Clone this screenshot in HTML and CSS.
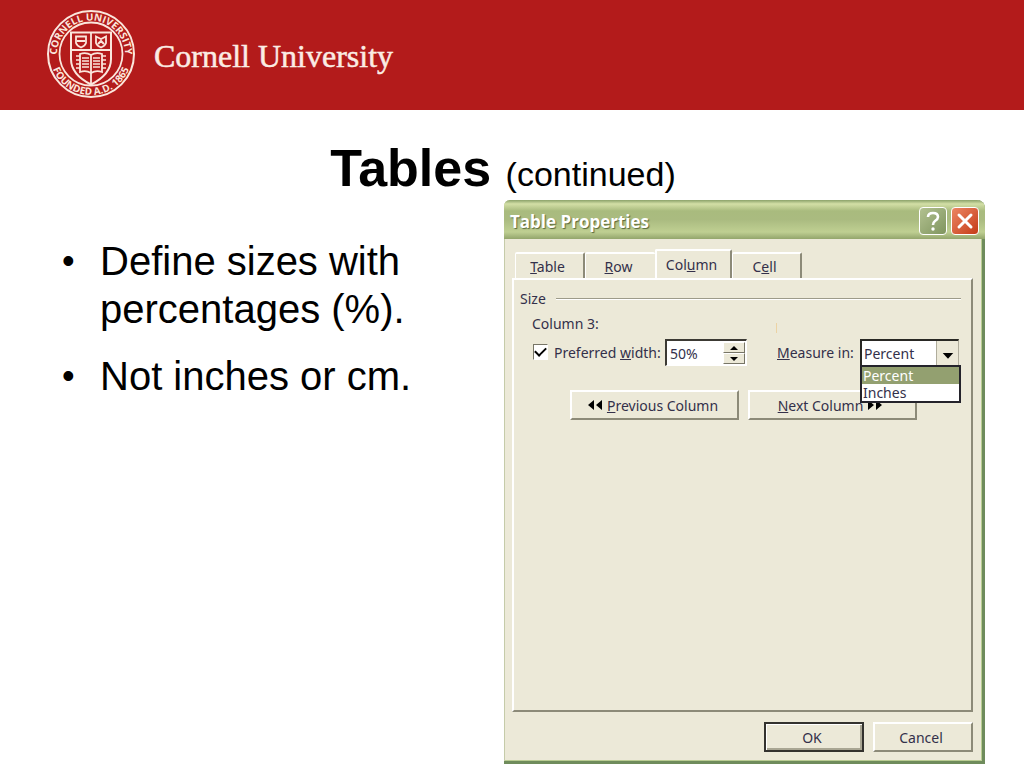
FILE: index.html
```html
<!DOCTYPE html>
<html lang="en">
<head>
<meta charset="utf-8">
<meta name="viewport" content="width=device-width, initial-scale=1">
<title>Tables (continued)</title>
<link rel="stylesheet" href="styles.css">
</head>
<body>
<header class="banner">
  <svg class="seal" viewBox="0 0 90 90" role="img" aria-label="Cornell University seal">
    <defs>
      <path id="arc-top" d="M13 57A34 34 0 1 1 77 57"/>
      <path id="arc-bottom" d="M4 45A41 41 0 0 0 86 45"/>
    </defs>
    <g fill="none" stroke="#fbe6dc">
      <circle cx="45" cy="45" r="43" stroke-width="2"/>
      <circle cx="45" cy="45" r="31.500" stroke-width="1.800"/>
      <path d="M25 23.500H65V50C65 62 56 70 45 75.500C34 70 25 62 25 50Z" stroke-width="2"/>
      <path d="M25 41H65M45 23.500V42M45 64V75" stroke-width="1.800"/>
      <path d="M30 27.500H40V34Q39 37 35 38.500Q31 37 30 34ZM50 27.500L55 30L60 27.500V34Q59 37 55 38.500Q51 37 50 34Z" stroke-width="1.800"/>
      <path d="M31 32H39M52 35L55 32L58 35" stroke-width="2"/>
      <path d="M45 46Q40 43 34 45V63Q40 61 45 64Q50 61 56 63V45Q50 43 45 46V64" stroke-width="1.800"/>
      <path d="M36 49H43M36 52H43M36 55H43M36 58H43M47 49H54M47 52H54M47 55H54M47 58H54" stroke-width="1.700"/>
      <path d="M30 47H34M30 51H34M30 55H34M30 59H34M56 47H60M56 51H60M56 55H60M56 59H60" stroke-width="1.700"/>
    </g>
    <text class="seal-text"><textPath href="#arc-top" startOffset="50%">CORNELL UNIVERSITY</textPath></text>
    <text class="seal-text"><textPath href="#arc-bottom" startOffset="50%">FOUNDED A.D. 1865</textPath></text>
  </svg>
  <span class="wordmark">Cornell University</span>
</header>

<main class="slide">
  <h1 class="title">Tables <small>(continued)</small></h1>
  <div class="columns">
    <ul class="bullets">
      <li>Define sizes with percentages (%).</li>
      <li>Not inches or cm.</li>
    </ul>

    <section class="dialog" aria-labelledby="dialog-title">
      <div class="titlebar">
        <h2 class="dialog-title" id="dialog-title">Table Properties</h2>
        <button class="caption-button help" type="button" aria-label="Help">
          <svg viewBox="0 0 26 26"><path d="M8 9Q8 5 13 5Q18 5 18 9Q18 11 15 13Q13 14.500 13 17" fill="none" stroke="#fff" stroke-width="2.600"/><circle cx="13" cy="21" r="1.700" fill="#fff"/></svg>
        </button>
        <button class="caption-button close" type="button" aria-label="Close">
          <svg viewBox="0 0 26 26"><path d="M7 7L19 19M19 7L7 19" stroke="#fff" stroke-width="3" stroke-linecap="round"/></svg>
        </button>
      </div>

      <div class="dialog-body">
        <div class="tabs" role="tablist">
          <button class="tab" type="button" role="tab" aria-selected="false"><span><u>T</u>able</span></button>
          <button class="tab" type="button" role="tab" aria-selected="false"><span><u>R</u>ow</span></button>
          <button class="tab active" type="button" role="tab" aria-selected="true"><span>Col<u>u</u>mn</span></button>
          <button class="tab" type="button" role="tab" aria-selected="false"><span>C<u>e</u>ll</span></button>
        </div>

        <div class="panel" role="tabpanel">
          <h3 class="group-heading">Size</h3>
          <p class="column-name">Column 3:<span class="caret-mark"></span></p>
          <div class="fields">
            <input class="check" type="checkbox" id="preferred" checked>
            <label class="width-label" for="preferred">Preferred <u>w</u>idth:</label>
            <div class="spinner">
              <input class="spin-input" type="text" value="50%" aria-label="Preferred width">
              <div class="spin-buttons">
                <button type="button" aria-label="Increase"><svg viewBox="0 0 8 4"><path d="M4 0L8 4H0Z"/></svg></button>
                <button type="button" aria-label="Decrease"><svg viewBox="0 0 8 4"><path d="M0 0H8L4 4Z"/></svg></button>
              </div>
            </div>
            <label class="measure-label" for="measure"><u>M</u>easure in:</label>
            <div class="combo">
              <select class="combo-select" id="measure">
                <option>Percent</option>
                <option>Inches</option>
              </select>
              <svg class="combo-arrow" viewBox="0 0 22 24"><path d="M6 12H17L11.500 18Z"/></svg>
              <ul class="combo-list" aria-label="Measure in choices">
                <li class="chosen">Percent</li>
                <li>Inches</li>
              </ul>
            </div>
          </div>
          <div class="nav">
            <button class="button" type="button">
              <svg class="arrows" viewBox="0 0 15 10"><path d="M7 0V10L1 5ZM15 0V10L9 5Z"/></svg>
              <span><u>P</u>revious Column</span>
            </button>
            <button class="button" type="button">
              <span><u>N</u>ext Column</span>
              <svg class="arrows" viewBox="0 0 15 10"><path d="M0 0V10L6 5ZM8 0V10L14 5Z"/></svg>
            </button>
          </div>
        </div>

        <div class="actions">
          <button class="button default" type="button">OK</button>
          <button class="button" type="button">Cancel</button>
        </div>
      </div>
    </section>
  </div>
</main>
</body>
</html>
```

FILE: styles.css
```css
* {
  box-sizing: border-box;
}

body {
  margin: 0;
  min-height: 100vh;
  display: flex;
  flex-direction: column;
  background: #fff;
  color: #000;
  font-family: "Liberation Sans", Arial, sans-serif;
}

.banner {
  display: flex;
  align-items: center;
  gap: 18px;
  height: 110px;
  padding: 0 46px 2px;
  background: #b31b1b;
}

.seal {
  width: 90px;
  height: 90px;
}

.seal-text {
  fill: #fbe6dc;
  font: bold 10px "Open Sans", sans-serif;
  text-anchor: middle;
}

.wordmark {
  padding-top: 4px;
  color: #fbece4;
  font: 32px "Liberation Serif", "Times New Roman", serif;
  -webkit-text-stroke: 0.5px #fbece4;
}

.slide {
  flex: 1;
  display: flex;
  flex-direction: column;
  padding-bottom: 4px;
}

.title {
  margin: 0;
  padding: 28px 18px 2px 0;
  font-size: 52px;
  line-height: 60px;
  text-align: center;
}

.title small {
  font-size: 34px;
  font-weight: normal;
  line-height: 1;
}

.columns {
  flex: 1;
  display: grid;
  grid-template-columns: 504fr 481fr;
  padding-right: 39px;
}

.bullets {
  margin: 0;
  padding: 37px 80px 0 100px;
  list-style: none;
  font-size: 40px;
  line-height: 48px;
}

.bullets li {
  margin-bottom: 19px;
}

.bullets li::before {
  content: "•";
  float: left;
  margin-left: -38px;
  font-size: 36px;
}

.dialog {
  display: flex;
  flex-direction: column;
  border: solid #6f8c5c;
  border-width: 0 3px 3px 0;
  border-radius: 6px 8px 0 0;
  background: #ece9d8;
  box-shadow: inset 1px 0 #c5cba9, inset -1px -1px #b9cc92;
  color: #33304a;
  font: 14px "Noto Sans", Tahoma, sans-serif;
}

.titlebar {
  display: flex;
  align-items: center;
  gap: 4px;
  height: 39px;
  padding: 3px 6px 0 6px;
  margin-right: -3px;
  border-radius: 6px 8px 0 0;
  background: linear-gradient(#8ba26a, #d3dfa6 10%, #a9bb7e 28%, #aabb80 50%, #bfcf92 82%, #93a56c);
}

.dialog-title {
  flex: 1;
  margin: 0;
  color: #fff;
  font: bold 17px "Open Sans", "Trebuchet MS", sans-serif;
  text-shadow: 1px 1px 1px #59683c;
}

.caption-button {
  width: 28px;
  height: 28px;
  padding: 0;
  border: 1px solid #fff;
  border-radius: 4px;
}

.caption-button svg {
  display: block;
}

.help {
  background: linear-gradient(135deg, #b2c190, #80955f);
}

.close {
  background: linear-gradient(135deg, #ec8664, #c53c18);
}

.dialog-body {
  flex: 1;
  display: flex;
  flex-direction: column;
  padding: 10px 9px 9px 8px;
}

.tabs {
  display: flex;
  align-items: flex-end;
  height: 29px;
  padding-left: 3px;
}

.tab {
  width: 70px;
  height: 26px;
  padding: 1px 6px 0 2px;
  border: solid #fff;
  border-width: 2px 2px 0 1px;
  border-right-color: #8c8a78;
  border-radius: 2px 2px 0 0;
  background: #ece9d8;
  color: inherit;
  font: inherit;
}

.tab.active {
  width: 77px;
  height: 29px;
  padding-bottom: 2px;
  border-left-width: 2px;
}

.tab:has(+ .active) {
  border-right-width: 0;
}

.panel {
  flex: 1;
  padding: 9px 10px 0 6px;
  border: 2px solid #fff;
  border-right-color: #8c8a78;
  border-bottom-color: #8c8a78;
}

.group-heading {
  display: flex;
  align-items: center;
  gap: 10px;
  margin: 0;
  font: inherit;
  line-height: 20px;
}

.group-heading::after {
  content: "";
  flex: 1;
  border-top: 1px solid #9d9b89;
  border-bottom: 1px solid #fff;
}

.column-name {
  display: flex;
  justify-content: space-between;
  margin: 5px 0 0 12px;
  line-height: 20px;
}

.caret-mark {
  width: 1px;
  height: 10px;
  margin: 9px 184px 0 0;
  background: #ecd3a4;
}

.fields {
  display: flex;
  align-items: center;
  margin-top: 5px;
  padding-left: 13px;
  white-space: nowrap;
}

.check {
  appearance: none;
  width: 15px;
  height: 16px;
  margin: 0 6px 2px 0;
  border: 1px solid;
  border-color: #777566 #fff #fff #777566;
  background: #fff;
  display: grid;
  place-items: center;
}

.check:checked::before {
  content: "";
  width: 9px;
  height: 5px;
  margin-bottom: 3px;
  border: solid #000;
  border-width: 0 0 2px 2px;
  rotate: -45deg;
}

.width-label {
  width: 111px;
}

.spinner {
  display: flex;
  width: 82px;
  height: 27px;
  padding: 1px;
  border: solid;
  border-width: 2px 1px 1px 2px;
  border-color: #3c3a34 #fff #fff #3c3a34;
  background: #fff;
}

.spin-input {
  flex: 1;
  min-width: 0;
  padding: 0 2px;
  border: 0;
  background: #fff;
  color: inherit;
  font: inherit;
}

.spin-buttons {
  display: flex;
  flex-direction: column;
  width: 22px;
}

.spin-buttons button {
  flex: 1;
  display: grid;
  place-items: center;
  padding: 0;
  border: 1px solid;
  border-color: #fff #777566 #777566 #fff;
  background: #ece9d8;
}

.spin-buttons svg {
  width: 8px;
  height: 4px;
}

.measure-label {
  width: 83px;
  margin-left: auto;
}

.combo {
  position: relative;
  width: 101px;
}

.combo-select {
  appearance: none;
  display: block;
  width: 99px;
  height: 27px;
  padding: 0 22px 0 2px;
  border: solid;
  border-width: 2px 1px 1px 2px;
  border-color: #292824 #b0ad9c #fff #292824;
  border-radius: 0;
  background: #fff;
  color: inherit;
  font: inherit;
}

.combo-arrow {
  position: absolute;
  top: 2px;
  right: 3px;
  width: 22px;
  height: 24px;
  border-left: 1px solid #b0ad9c;
  background: #ece9d8;
  pointer-events: none;
}

.combo-list {
  position: absolute;
  top: 26px;
  left: 0;
  z-index: 1;
  width: 101px;
  margin: 0;
  padding: 0;
  border: 2px solid #24232b;
  background: #fff;
  list-style: none;
  line-height: 17px;
}

.combo-list li {
  padding-left: 1px;
}

.combo-list .chosen {
  background: #93a070;
  color: #fff;
}

.nav {
  display: flex;
  gap: 9px;
  margin: 24px 0 0 50px;
}

.button {
  display: flex;
  align-items: center;
  justify-content: center;
  gap: 5px;
  width: 100px;
  height: 30px;
  padding: 0 4px 0 0;
  border: 2px solid;
  border-color: #fff #8c8a78 #8c8a78 #fff;
  background: #ece9d8;
  color: inherit;
  font: inherit;
  white-space: nowrap;
}

.nav .button {
  width: 169px;
}

.arrows {
  width: 15px;
  height: 10px;
}

.default {
  border-color: #33322e;
  box-shadow: inset 1px 1px #fff, inset -2px -2px #a9a693;
}

.actions {
  display: flex;
  justify-content: flex-end;
  gap: 9px;
  margin-top: 10px;
}
```
